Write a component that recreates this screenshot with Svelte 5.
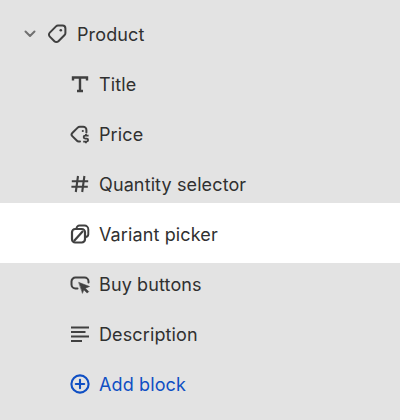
<script>
  const blocks = [
    { label: "Title", icon: "title" },
    { label: "Price", icon: "price" },
    { label: "Quantity selector", icon: "hash" },
    { label: "Variant picker", icon: "variant", active: true },
    { label: "Buy buttons", icon: "buy" },
    { label: "Description", icon: "text" }
  ];
</script>

{#snippet icon(name)}
  <svg class="icon" viewBox="0 0 20 20" fill="none" stroke="currentColor" stroke-width="2" stroke-linecap="round" stroke-linejoin="round">
    {#if name === "tag"}
      <path d="M11 1.600h4.600a2.800 2.800 0 0 1 2.800 2.800V9a2.800 2.800 0 0 1-.8 2l-6.200 6.200a2.800 2.800 0 0 1-4 0l-4.600-4.600a2.800 2.800 0 0 1 0-4L9 2.400a2.800 2.800 0 0 1 2-.8Z" />
      <circle cx="13.800" cy="6.200" r="1.300" fill="currentColor" stroke="none" />
    {:else if name === "title"}
      <path d="M3 6.500V3.500h14v3M10 3.500v13.500M7 17h6" stroke-width="2.400" stroke-linecap="butt" stroke-linejoin="miter" />
    {:else if name === "price"}
      <path d="M10 17.500H8.600a2.200 2.200 0 0 1-1.600-.7l-4.700-4.700a2.200 2.200 0 0 1 0-3.100l5.400-5.400a3 3 0 0 1 2.100-.9h3.400a3.200 3.200 0 0 1 3.200 3.200v2.600" />
      <circle cx="12.800" cy="7" r="1.100" fill="currentColor" stroke="none" />
      <path d="M18.600 11.600h-3.400a1.500 1.500 0 0 0 0 3h1.400a1.500 1.500 0 0 1 0 3h-3.400M15.900 10v1.600M15.900 17.600v1.600" stroke-width="1.900" stroke-linecap="butt" />
    {:else if name === "hash"}
      <path d="M8 2 5.800 18M14.400 2l-2.200 16M1.800 7.200h16.400M1.400 12.800h16.400" stroke-width="2.100" stroke-linecap="butt" />
    {:else if name === "variant"}
      <path d="M6.500 5V4.500a3 3 0 0 1 3-3h5a3.800 3.800 0 0 1 3.800 3.800v5A3 3 0 0 1 15.500 13" stroke-width="1.900" />
      <rect x="2" y="5" width="13" height="13.500" rx="3.200" stroke-width="2.200" />
      <path d="M4 17 13 7" stroke-width="2.200" stroke-linecap="butt" />
    {:else if name === "buy"}
      <path d="M7.500 14.500H5.500A4 4 0 0 1 1.500 10.500V7.500a4 4 0 0 1 4-4h9a4 4 0 0 1 4 4v1" />
      <path d="M9 8.500l10.500 4-4.200 1.700 3.400 3.400-1.500 1.500-3.400-3.400L12.600 19Z" fill="currentColor" stroke-width=".6" />
    {:else if name === "text"}
      <path d="M1 3.500h18M1 8h14.500M1 12.500h18M1 17h11" stroke-linecap="butt" />
    {:else if name === "plus"}
      <circle cx="10" cy="10" r="8.600" stroke-width="2.100" />
      <path d="M10 5.800v8.400M5.800 10h8.400" stroke-width="2.100" />
    {/if}
  </svg>
{/snippet}

<main class="tree">
  <div class="row parent">
    <svg class="chevron" viewBox="0 0 12 8" fill="none" stroke="currentColor" stroke-width="2" stroke-linecap="round" stroke-linejoin="round">
      <path d="M1.500 1.500 6 6l4.500-4.500" />
    </svg>
    {@render icon("tag")}
    <span>Product</span>
  </div>
  {#each blocks as block}
    <div class="row child" class:active={block.active}>
      {@render icon(block.icon)}
      <span>{block.label}</span>
    </div>
  {/each}
  <div class="row child add">
    {@render icon("plus")}
    <span>Add block</span>
  </div>
</main>

<style>
  :global(body) {
    background: #e3e3e3;
  }

  .tree {
    width: 400px;
    height: 420px;
    box-sizing: border-box;
    padding-top: 9px;
    font-family: Inter, "Liberation Sans", sans-serif;
    font-size: 18px;
    letter-spacing: 0.12px;
    color: #303030;
    overflow: hidden;
  }

  .row {
    display: flex;
    align-items: center;
    height: 50px;
  }

  .parent {
    padding-left: 24px;
  }

  .chevron {
    width: 12px;
    height: 8px;
    color: #707070;
    margin-right: 11px;
  }

  .child {
    padding-left: 70px;
  }

  .icon {
    width: 20px;
    height: 20px;
    flex: none;
    margin-right: 9px;
    color: #404040;
  }

  .parent .icon {
    margin-right: 10px;
  }

  .active {
    background: #fff;
    margin: -6px 0 -4px;
    padding-top: 6px;
    padding-bottom: 4px;
  }

  .add,
  .add .icon {
    color: #0f4fc4;
  }
</style>
